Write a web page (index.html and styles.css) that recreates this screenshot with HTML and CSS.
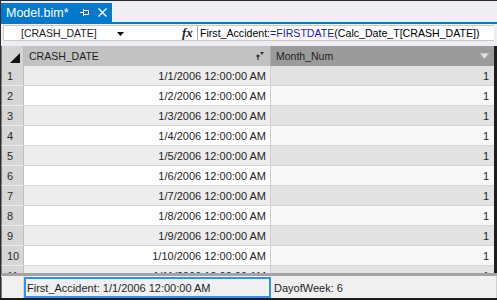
FILE: index.html
```html
<!DOCTYPE html>
<html>
<head>
<meta charset="utf-8">
<link rel="stylesheet" href="styles.css">
</head>
<body>
<div class="app">
  <div class="tabstrip">
    <div class="tab">
      <span class="tab-title">Model.bim*</span>
      <svg class="pin" width="9" height="7" viewBox="0 0 9 7"><path d="M0 3.5H3M3.5 0V7M4 1.5H8.5V5.5H4" fill="none" stroke="#fff" stroke-width="1"/></svg>
      <svg class="close" width="9" height="9" viewBox="0 0 9 9"><path d="M0.5 0.5L8.5 8.5M8.5 0.5L0.5 8.5" stroke="#fff" stroke-width="1.4"/></svg>
    </div>
  </div>
  <div class="accent"></div>
  <div class="formulabar">
    <div class="namebox">
      <span>[CRASH_DATE]</span>
      <svg class="dd" width="7" height="4" viewBox="0 0 7 4"><path d="M0 0H7L3.5 4Z" fill="#000"/></svg>
    </div>
    <div class="fx">fx</div>
    <div class="formula">First_Accident:<span class="op">=</span><span class="fn">FIRSTDATE</span>(Calc_Date_T[CRASH_DATE])</div>
  </div>
  <div class="grid">
    <div class="hcell corner"><svg width="10" height="10" viewBox="0 0 10 10"><path d="M10 0V10H0Z" fill="#111"/></svg></div>
    <div class="hcell h1"><span>CRASH_DATE</span>
      <svg class="sort" width="8" height="8" viewBox="0 0 8 8"><path d="M2 8V3M0.5 4.5L2 3L3.5 4.5" stroke="#333" fill="none" stroke-width="1.2"/><path d="M4 0H8L6 3Z" fill="#333"/></svg>
    </div>
    <div class="hcell h2"><span>Month_Num</span>
      <svg class="filt" width="9" height="6" viewBox="0 0 9 6"><path d="M0.5 0.5H8.5L4.5 5.5Z" fill="#e4e4e4" stroke="#c8c8c8"/></svg>
    </div>

    <div class="rn">1</div><div class="c1 odd">1/1/2006 12:00:00 AM</div><div class="c2 odd">1</div>
    <div class="rn">2</div><div class="c1">1/2/2006 12:00:00 AM</div><div class="c2">1</div>
    <div class="rn">3</div><div class="c1 odd">1/3/2006 12:00:00 AM</div><div class="c2 odd">1</div>
    <div class="rn">4</div><div class="c1">1/4/2006 12:00:00 AM</div><div class="c2">1</div>
    <div class="rn">5</div><div class="c1 odd">1/5/2006 12:00:00 AM</div><div class="c2 odd">1</div>
    <div class="rn">6</div><div class="c1">1/6/2006 12:00:00 AM</div><div class="c2">1</div>
    <div class="rn">7</div><div class="c1 odd">1/7/2006 12:00:00 AM</div><div class="c2 odd">1</div>
    <div class="rn">8</div><div class="c1">1/8/2006 12:00:00 AM</div><div class="c2">1</div>
    <div class="rn">9</div><div class="c1 odd">1/9/2006 12:00:00 AM</div><div class="c2 odd">1</div>
    <div class="rn">10</div><div class="c1">1/10/2006 12:00:00 AM</div><div class="c2">1</div>
    <div class="rn">11</div><div class="c1 odd">1/11/2006 12:00:00 AM</div><div class="c2 odd">1</div>
  </div>
  <div class="split"></div>
  <div class="calc">
    <div class="calc-rn"></div>
    <div class="calc-cell sel">First_Accident: 1/1/2006 12:00:00 AM</div>
    <div class="calc-cell">DayofWeek: 6</div>
  </div>
</div>
</body>
</html>
```

FILE: styles.css
```css
* { box-sizing: border-box; }
html, body { margin: 0; padding: 0; }
body {
  width: 497px;
  height: 300px;
  overflow: hidden;
  font-family: "Liberation Sans", Arial, sans-serif;
  background: #eeeef2;
}
.app {
  width: 497px;
  height: 300px;
  display: flex;
  flex-direction: column;
  border-top: 1px solid #2b2b2b;
  border-left: 1px solid #2b2b2b;
  border-bottom: 2px solid #1a1a1a;
  background: #eeeef2;
  overflow: hidden;
}
.tabstrip {
  height: 21px;
  display: flex;
  align-items: flex-end;
  flex: none;
}
.tab {
  height: 19px;
  width: 111px;
  background: #007acc;
  color: #fff;
  display: flex;
  align-items: center;
  padding-left: 5px;
  font-size: 12.5px;
}
.tab-title { width: 74px; }
.close { margin-left: 9px; }
.accent {
  height: 2px;
  background: #007acc;
  flex: none;
}
.formulabar {
  flex: none;
  height: 16px;
  margin: 1px 3px 0 2px;
  background: #fff;
  border-top: 1px solid #c9c9c9;
  border-bottom: 1px solid #c9c9c9;
  border-left: 1px solid #c9c9c9;
  display: flex;
  align-items: center;
  font-size: 11px;
}
.namebox {
  width: 178px;
  display: flex;
  align-items: center;
  padding-left: 17px;
  color: #1e1e1e;
}
.namebox span { width: 96px; font-size: 10.5px; }
.dd { margin-top: 1px; }
.fx {
  width: 15px;
  font-family: "Liberation Serif", "Times New Roman", serif;
  font-style: italic;
  font-weight: bold;
  font-size: 13px;
  color: #222;
  line-height: 14px;
}
.formula {
  flex: 1;
  height: 14px;
  border-left: 1px solid #a9a9a9;
  padding-left: 2px;
  line-height: 14px;
  color: #000;
  font-size: 10.6px;
  white-space: nowrap;
  overflow: hidden;
}
.formula .fn { color: #1515d0; }
.formula .op { color: #1515d0; }

.grid {
  flex: none;
  margin-top: 5px;
  height: 227px;
  overflow: hidden;
  display: grid;
  grid-template-columns: 23px 247px 1fr;
  grid-auto-rows: 20px;
  border-right: 3px solid #1e1e1e;
  font-size: 11px;
  color: #1e1e1e;
}
.hcell {
  display: flex;
  align-items: center;
  font-size: 10.5px;
  color: #1e1e1e;
}
.corner {
  background: #d4d4d4;
  justify-content: flex-end;
  padding: 4px 3px 0 0;
  border-left: 1px solid #7a7a7a;
  border-right: 1px solid #bdbdbd;
}
.h1 {
  background: #c2c2c2;
  padding-left: 5px;
  border-right: 1px solid #b0b0b0;
  justify-content: space-between;
  padding-right: 6px;
}
.h2 {
  background: #9b9b9b;
  padding-left: 5px;
  justify-content: space-between;
  padding-right: 5px;
}
.rn {
  background: #d6d6d6;
  border-left: 1px solid #7a7a7a;
  border-bottom: 1px solid #eaeaea;
  border-right: 1px solid #bdbdbd;
  padding-left: 5px;
  display: flex;
  align-items: center;
  font-size: 11px;
  color: #2a2a2a;
}
.c1, .c2 {
  display: flex;
  align-items: center;
  justify-content: flex-end;
  border-bottom: 1px solid #d6d6d6;
  white-space: nowrap;
}
.c1 {
  background: #ffffff;
  border-right: 1px solid #d0d0d0;
  padding-right: 4px;
}
.c1.odd { background: #ededed; }
.c2 {
  background: #f8f8f8;
  padding-right: 5px;
}
.c2.odd { background: #e2e2e2; }

.split {
  flex: none;
  height: 3px;
  background: #a3a3a3;
}
.calc {
  flex: 1;
  display: grid;
  grid-template-columns: 23px 247px 1fr;
  background: #f0f0f0;
  font-size: 11px;
  color: #1e1e1e;
  padding-top: 1px;
  border-right: 1px solid #cfcfcf;
}
.calc-rn {
  border-left: 1px solid #7a7a7a;
  border-right: 1px solid #d6d6d6;
}
.calc-cell {
  display: flex;
  align-items: center;
  padding-left: 3px;
  white-space: nowrap;
}
.calc-cell.sel {
  border: 2px solid #3c8ee0;
  padding-left: 1px;
}
```
